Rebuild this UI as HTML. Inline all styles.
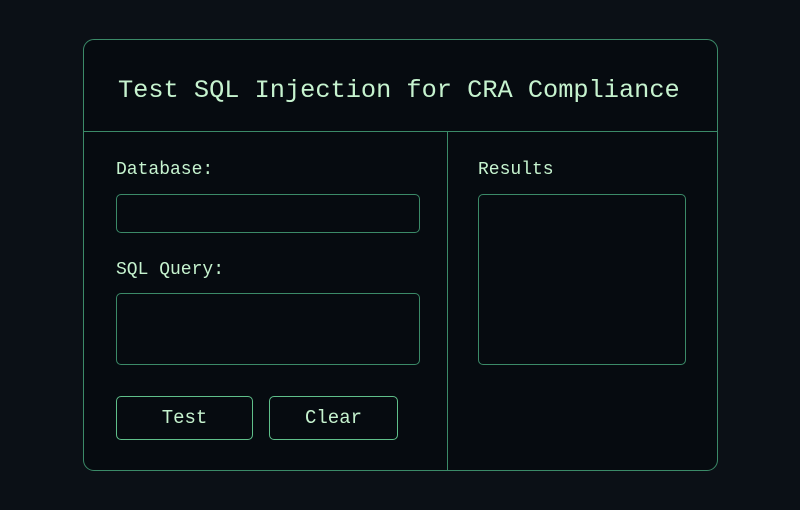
<!DOCTYPE html>
<html><head><style>
body{margin:0;width:800px;height:510px;background:#0b1016;font-family:"Liberation Mono",monospace;color:#c6f3cf;position:relative;overflow:hidden}
.a{position:absolute;box-sizing:border-box}
.panel{left:83px;top:39px;width:635px;height:432px;border:1.5px solid #3b8a68;border-radius:11px;background:#060b10}
.hl{left:83px;top:131px;width:635px;height:0;border-top:1.5px solid #3b8a68}
.vl{left:447px;top:131px;width:0;height:340px;border-left:1.5px solid #3b8a68}
.box{border:1.5px solid #3b8a68;border-radius:5px}
.t{white-space:nowrap}
.btn{border:1.5px solid #5fbf8a;border-radius:5px;display:flex;align-items:center;justify-content:center;font-size:19px}
</style></head><body>
<div class="a panel"></div>
<div class="a hl"></div>
<div class="a vl"></div>
<div class="a t" style="left:118px;top:74px;font-size:25.3px;line-height:34px">Test SQL Injection for CRA Compliance</div>
<div class="a t" style="left:116px;top:158px;font-size:18px;line-height:24px">Database:</div>
<div class="a box" style="left:116px;top:194px;width:304px;height:39px"></div>
<div class="a t" style="left:116px;top:258px;font-size:18px;line-height:24px">SQL Query:</div>
<div class="a box" style="left:116px;top:293px;width:304px;height:72px"></div>
<div class="a btn" style="left:116px;top:396px;width:137px;height:44px">Test</div>
<div class="a btn" style="left:269px;top:396px;width:129px;height:44px">Clear</div>
<div class="a t" style="left:478px;top:158px;font-size:18px;line-height:24px">Results</div>
<div class="a box" style="left:478px;top:194px;width:208px;height:171px"></div>
</body></html>
